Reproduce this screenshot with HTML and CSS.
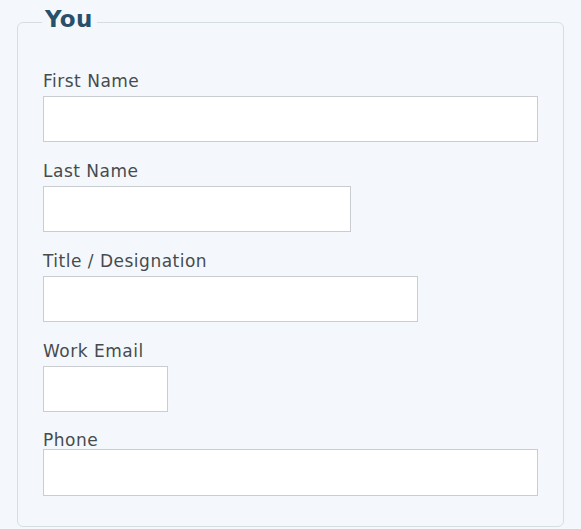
FILE: index.html
```html
<!DOCTYPE html>
<html>
<head>
<meta charset="utf-8">
<link rel="stylesheet" href="styles.css">
</head>
<body>
<form class="form">
  <fieldset class="group">
    <legend class="group-title">You</legend>
    <div class="field">
      <label class="label" for="fn">First Name</label>
      <input class="input input-full" id="fn" type="text">
    </div>
    <div class="field">
      <label class="label" for="ln">Last Name</label>
      <input class="input input-md" id="ln" type="text">
    </div>
    <div class="field">
      <label class="label" for="tt">Title / Designation</label>
      <input class="input input-lg" id="tt" type="text">
    </div>
    <div class="field">
      <label class="label" for="em">Work Email</label>
      <input class="input input-sm" id="em" type="text">
    </div>
    <div class="field field-tight">
      <label class="label" for="ph">Phone</label>
      <input class="input input-full input-tall" id="ph" type="text">
    </div>
  </fieldset>
</form>
</body>
</html>
```
FILE: styles.css
```css
html, body {
  margin: 0;
  padding: 0;
  background: #f4f8fc;
}
body {
  padding-top: 6px;
  font-family: "DejaVu Sans", Verdana, sans-serif;
}
.form {
  margin: 0;
}
.group {
  box-sizing: border-box;
  width: 547px;
  margin: 0 0 0 17px;
  padding: 0 24px 30px 25px;
  border: 1px solid #d6dde3;
  border-radius: 6px;
  background: #f4f8fc;
  display: flex;
  flex-direction: column;
}
.group-title {
  font-size: 23px;
  font-weight: bold;
  line-height: 26px;
  color: #284f6b;
  padding: 0 4px 6px 3px;
  margin-left: -1px;
  letter-spacing: 0.3px;
}
.field {
  display: flex;
  flex-direction: column;
  margin-top: 19px;
}
.field:first-of-type {
  margin-top: 33px;
}
.label {
  font-size: 17px;
  line-height: 20px;
  letter-spacing: 0.5px;
  color: #474b4e;
  margin-bottom: 5px;
}
.field-tight .label {
  margin-top: -1px;
  margin-bottom: -1px;
}
.input {
  box-sizing: border-box;
  height: 46px;
  margin: 0;
  padding: 0 6px;
  border: 1px solid #c9cdd1;
  border-radius: 0;
  background: #ffffff;
  font-family: "DejaVu Sans", Verdana, sans-serif;
  font-size: 16px;
}
.input-tall { height: 47px; }
.input-full { width: 495px; }
.input-md { width: 308px; }
.input-lg { width: 375px; }
.input-sm { width: 125px; }
```
